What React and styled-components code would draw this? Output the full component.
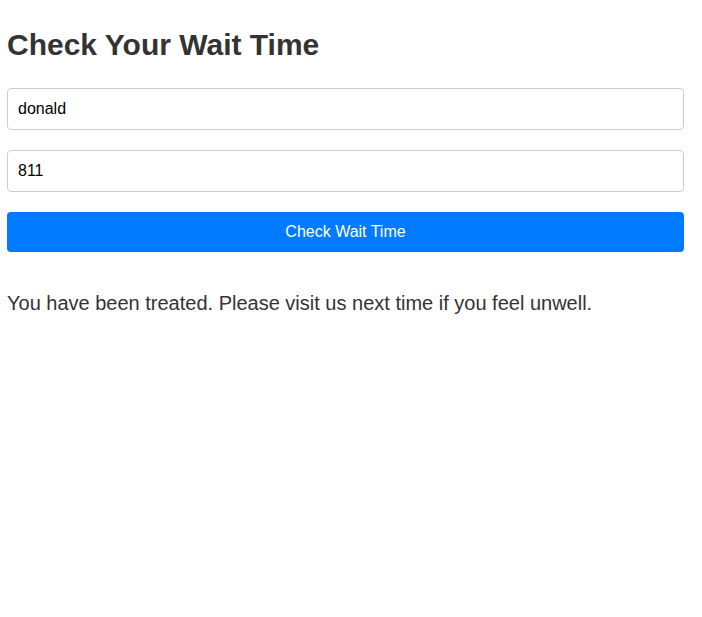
import React, { useState } from 'react';
import styled, { createGlobalStyle } from 'styled-components';

const GlobalStyle = createGlobalStyle`
  body {
    margin: 0;
    background: #fff;
    font-family: 'Liberation Sans', Arial, sans-serif;
  }
`;

function App() {
  const [name, setName] = useState('donald');
  const [code, setCode] = useState('811');

  return (
    <Page>
      <GlobalStyle />
      <Title>Check Your Wait Time</Title>
      <Field value={name} onChange={(e) => setName(e.target.value)} />
      <Field value={code} onChange={(e) => setCode(e.target.value)} />
      <Button>Check Wait Time</Button>
      <Message>You have been treated. Please visit us next time if you feel unwell.</Message>
    </Page>
  );
}

export default App;

const Page = styled.div`
  display: flex;
  flex-direction: column;
  width: 677px;
  padding: 0 7px;
  color: #333;
`;

const Title = styled.h1`
  font-size: 30px;
  font-weight: bold;
  margin: 28px 0 26px 0;
  color: #333;
`;

const Field = styled.input`
  box-sizing: border-box;
  width: 100%;
  height: 42px;
  padding: 0 10px;
  margin-bottom: 20px;
  border: 1px solid #ccc;
  border-radius: 4px;
  font-family: 'Liberation Sans', Arial, sans-serif;
  font-size: 16px;
  color: #000;
  outline: none;
`;

const Button = styled.button`
  width: 100%;
  height: 40px;
  border: none;
  border-radius: 4px;
  background: #007bff;
  color: #fff;
  font-family: 'Liberation Sans', Arial, sans-serif;
  font-size: 16px;
  cursor: pointer;
`;

const Message = styled.p`
  font-size: 20px;
  margin: 40px 0 0 0;
  color: #333;
`;
